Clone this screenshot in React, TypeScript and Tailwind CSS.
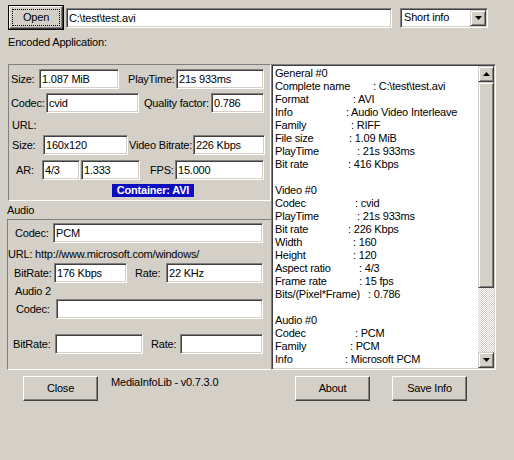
import type { ReactNode } from "react";

// Classic Win2k style MediaInfo dialog

function Field({ className, value }: { className: string; value?: string }) {
  return (
    <div
      className={`h-[20px] shrink-0 bg-white border border-t-[#808080] border-l-[#808080] border-b-white border-r-white shadow-[inset_1px_1px_0_#404040,inset_-1px_-1px_0_#d4d0c8] pl-[2px] leading-[18px] whitespace-nowrap overflow-hidden ${className}`}
    >
      {value}
    </div>
  );
}

function Btn({ className, children }: { className: string; children: ReactNode }) {
  return (
    <div
      className={`h-[25px] shrink-0 flex items-center justify-center border border-t-white border-l-white border-b-[#404040] border-r-[#404040] shadow-[inset_-1px_-1px_0_#808080] ${className}`}
    >
      {children}
    </div>
  );
}

function Arrow({ up }: { up?: boolean }) {
  return (
    <svg width="7" height="4" viewBox="0 0 7 4">
      <path d={up ? "M3.5 0 L7 4 L0 4 Z" : "M0 0 L7 0 L3.5 4 Z"} fill="#000" />
    </svg>
  );
}

const lines: [string, string, string][] = [
  ["General #0", "", ""],
  ["Complete name", "C:\\test\\test.avi", "w-[98px]"],
  ["Format", "AVI", "w-[78px]"],
  ["Info", "Audio Video Interleave", "w-[71px]"],
  ["Family", "RIFF", "w-[76px]"],
  ["File size", "1.09 MiB", "w-[74px]"],
  ["PlayTime", "21s 933ms", "w-[82px]"],
  ["Bit rate", "416 Kbps", "w-[73px]"],
  ["", "", ""],
  ["Video #0", "", ""],
  ["Codec", "cvid", "w-[80px]"],
  ["PlayTime", "21s 933ms", "w-[82px]"],
  ["Bit rate", "226 Kbps", "w-[73px]"],
  ["Width", "160", "w-[78px]"],
  ["Height", "120", "w-[78px]"],
  ["Aspect ratio", "4/3", "w-[84px]"],
  ["Frame rate", "15 fps", "w-[84px]"],
  ["Bits/(Pixel*Frame)", "0.786", "w-[93px]"],
  ["", "", ""],
  ["Audio #0", "", ""],
  ["Codec", "PCM", "w-[80px]"],
  ["Family", "PCM", "w-[75px]"],
  ["Info", "Microsoft PCM", "w-[70px]"],
];

const sunken =
  "border border-t-[#808080] border-l-[#808080] border-b-white border-r-white";

export default function App() {
  return (
    <div className="w-[514px] h-[460px] bg-[#d4d0c8] text-black text-[11px] leading-[13px] tracking-[-0.2px] font-['Liberation_Sans',Arial,sans-serif] overflow-hidden whitespace-nowrap">
      {/* top bar */}
      <div className="flex items-center mt-[5px] ml-[8px] h-[25px]">
        <div className="w-[56px] h-[25px] border border-black flex">
          <div className="flex-1 flex border border-t-white border-l-white border-b-[#404040] border-r-[#404040] shadow-[inset_-1px_-1px_0_#808080] p-[2px]">
            <div className="flex-1 border border-dotted border-black flex items-center justify-center">
              Open
            </div>
          </div>
        </div>
        <Field className="w-[326px] ml-[2px]" value="C:\test\test.avi" />
        <div className="ml-[8px] w-[88px] h-[20px] bg-white border border-t-[#808080] border-l-[#808080] border-b-white border-r-white shadow-[inset_1px_1px_0_#404040,inset_-1px_-1px_0_#d4d0c8] flex items-center p-[1px]">
          <span className="flex-1 pl-[2px]">Short info</span>
          <div className="w-[16px] h-[16px] flex items-center justify-center border border-t-[#d4d0c8] border-l-[#d4d0c8] border-b-[#404040] border-r-[#404040] bg-[#d4d0c8] shadow-[inset_1px_1px_0_#fff,inset_-1px_-1px_0_#808080]">
            <Arrow />
          </div>
        </div>
      </div>

      <div className="ml-[8px] mt-[6px]">Encoded Application:</div>

      {/* main area */}
      <div className="flex mt-[15px] ml-[8px]">
        <div className="w-[263px] flex flex-col">
          {/* video panel */}
          <div className={`h-[137px] ${sunken} flex flex-col`}>
            <div className="flex items-center mt-[4px] ml-[2px]">
              <span className="w-[28px]">Size:</span>
              <Field className="w-[80px]" value="1.087 MiB" />
              <span className="w-[48px] ml-[9px]">PlayTime:</span>
              <Field className="w-[88px]" value="21s 933ms" />
            </div>
            <div className="flex items-center mt-[4px] ml-[2px]">
              <span className="w-[35px]">Codec:</span>
              <Field className="w-[93px]" value="cvid" />
              <span className="w-[67px] ml-[5px]">Quality factor:</span>
              <Field className="w-[53px]" value="0.786" />
            </div>
            <div className="h-[16px] mt-[4px] ml-[3px] flex items-center">URL:</div>
            <div className="flex items-center mt-[2px] ml-[3px]">
              <span className="w-[31px]">Size:</span>
              <Field className="w-[85px]" value="160x120" />
              <span className="w-[64px] ml-[1px]">Video Bitrate:</span>
              <Field className="w-[72px]" value="226 Kbps" />
            </div>
            <div className="flex items-center mt-[5px] ml-[7px]">
              <span className="w-[26px]">AR:</span>
              <Field className="w-[38px]" value="4/3" />
              <Field className="w-[59px] ml-[1px]" value="1.333" />
              <span className="w-[25px] ml-[10px]">FPS:</span>
              <Field className="w-[89px]" value="15.000" />
            </div>
            <div className="mt-[4px] ml-[103px] w-[82px] h-[13px] bg-[#0c0cc0] text-white font-bold text-center leading-[13px]">
              Container: AVI
            </div>
          </div>

          {/* audio */}
          <div className="mt-[3px] -ml-px">Audio</div>
          <div className={`mt-[2px] -ml-px w-[265px] h-[151px] ${sunken} flex flex-col`}>
            <div className="flex items-center mt-[3px] ml-[7px]">
              <span className="w-[38px]">Codec:</span>
              <Field className="w-[210px]" value="PCM" />
            </div>
            <div className="h-[16px] mt-[3px] flex items-center">
              URL: http://www.microsoft.com/windows/
            </div>
            <div className="flex items-center mt-[1px] ml-[6px]">
              <span className="w-[40px]">BitRate:</span>
              <Field className="w-[73px]" value="176 Kbps" />
              <span className="w-[31px] ml-[8px]">Rate:</span>
              <Field className="w-[97px]" value="22 KHz" />
            </div>
            <div className="h-[14px] mt-[1px] ml-[7px] flex items-center">Audio 2</div>
            <div className="flex items-center mt-[1px] ml-[8px]">
              <span className="w-[40px]">Codec:</span>
              <Field className="w-[207px]" />
            </div>
            <div className="flex items-center mt-[15px] ml-[5px]">
              <span className="w-[42px]">BitRate:</span>
              <Field className="w-[88px]" />
              <span className="w-[29px] ml-[8px]">Rate:</span>
              <Field className="w-[83px]" />
            </div>
          </div>
        </div>

        {/* info list */}
        <div className="w-[225px] h-[306px] bg-white border border-t-[#808080] border-l-[#808080] border-b-white border-r-white shadow-[inset_1px_1px_0_#404040,inset_-1px_-1px_0_#d4d0c8] p-[1px] flex">
          <div className="flex-1 overflow-hidden pt-[1px] pl-[2px]">
            {lines.map(([label, value, w], i) => (
              <div key={i} className="h-[13px] flex">
                {w ? (
                  <>
                    <span className={`${w} shrink-0`}>{label}</span>
                    <span>: {value}</span>
                  </>
                ) : (
                  <span>{label}</span>
                )}
              </div>
            ))}
          </div>
          <div className="w-[16px] flex flex-col">
            <div className="h-[16px] flex items-center justify-center bg-[#d4d0c8] border border-t-[#d4d0c8] border-l-[#d4d0c8] border-b-[#404040] border-r-[#404040] shadow-[inset_1px_1px_0_#fff,inset_-1px_-1px_0_#808080]">
              <Arrow up />
            </div>
            <div className="h-[206px] bg-[#d4d0c8] border border-t-[#d4d0c8] border-l-[#d4d0c8] border-b-[#404040] border-r-[#404040] shadow-[inset_1px_1px_0_#fff,inset_-1px_-1px_0_#808080]" />
            <div className="flex-1 bg-[repeating-conic-gradient(#d4d0c8_0%_25%,#ffffff_0%_50%)] bg-[length:2px_2px]" />
            <div className="h-[16px] flex items-center justify-center bg-[#d4d0c8] border border-t-[#d4d0c8] border-l-[#d4d0c8] border-b-[#404040] border-r-[#404040] shadow-[inset_1px_1px_0_#fff,inset_-1px_-1px_0_#808080]">
              <Arrow />
            </div>
          </div>
        </div>
      </div>

      {/* bottom buttons */}
      <div className="flex items-start mt-[6px] ml-[23px]">
        <Btn className="w-[75px]">Close</Btn>
        <div className="w-[184px] ml-[13px]">MediaInfoLib - v0.7.3.0</div>
        <Btn className="w-[75px]">About</Btn>
        <Btn className="w-[75px] ml-[22px]">Save Info</Btn>
      </div>
    </div>
  );
}
